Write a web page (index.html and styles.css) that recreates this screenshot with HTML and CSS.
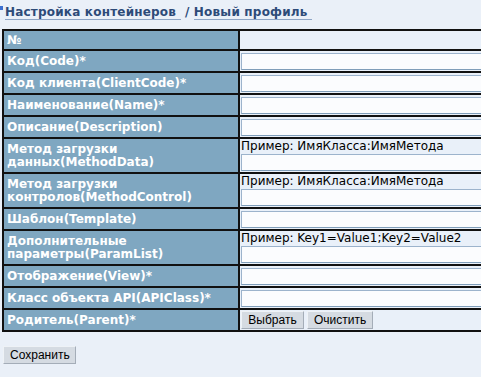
FILE: index.html
```html
<!DOCTYPE html>
<html lang="ru">
<head>
  <meta charset="UTF-8" />
  <title>Новый профиль</title>
  <link rel="stylesheet" href="styles.css">
</head>
<body>
  <div class="crumbs">
    <span class="mark"></span><a href="#" class="link">Настройка контейнеров&nbsp;</a> / <a href="#" class="link">Новый профиль&nbsp;</a>
  </div>

  <table class="form">
    <tr class="head">
      <td class="name">№</td>
      <td class="value"></td>
    </tr>
    <tr>
      <td class="name">Код(Code)*</td>
      <td class="value"><input type="text" /></td>
    </tr>
    <tr>
      <td class="name">Код клиента(ClientCode)*</td>
      <td class="value"><input type="text" /></td>
    </tr>
    <tr>
      <td class="name">Наименование(Name)*</td>
      <td class="value"><input type="text" /></td>
    </tr>
    <tr>
      <td class="name">Описание(Description)</td>
      <td class="value"><input type="text" /></td>
    </tr>
    <tr>
      <td class="name">Метод загрузки<br>данных(MethodData)</td>
      <td class="value"><div class="hint">Пример: ИмяКласса:ИмяМетода</div><input type="text" /></td>
    </tr>
    <tr>
      <td class="name">Метод загрузки<br>контролов(MethodControl)</td>
      <td class="value"><div class="hint">Пример: ИмяКласса:ИмяМетода</div><input type="text" /></td>
    </tr>
    <tr>
      <td class="name">Шаблон(Template)</td>
      <td class="value"><input type="text" /></td>
    </tr>
    <tr>
      <td class="name">Дополнительные<br>параметры(ParamList)</td>
      <td class="value"><div class="hint">Пример: Key1=Value1;Key2=Value2</div><input type="text" /></td>
    </tr>
    <tr>
      <td class="name">Отображение(View)*</td>
      <td class="value"><input type="text" /></td>
    </tr>
    <tr>
      <td class="name">Класс объекта API(APIClass)*</td>
      <td class="value"><input type="text" /></td>
    </tr>
    <tr>
      <td class="name">Родитель(Parent)*</td>
      <td class="value"><button type="button" class="btn pick">Выбрать</button><button type="button" class="btn clear">Очистить</button></td>
    </tr>
  </table>

  <div class="actions">
    <button type="button" class="btn save">Сохранить</button>
  </div>
</body>
</html>
```

FILE: styles.css
```css
html, body {
  margin: 0;
  overflow: hidden;
}

body {
  background-color: #eaf0f8;
  font-family: 'DejaVu Sans', Verdana, sans-serif;
  font-size: 11px;
  padding: 5px 0 0 2px;
}

.crumbs {
  height: 24px;
  padding-left: 3px;
  color: #2d4b78;
  font-weight: bold;
  font-size: 12px;
  letter-spacing: 0.2px;
  position: relative;
}

.mark {
  position: absolute;
  left: -2px;
  top: 1px;
  width: 3px;
  height: 4px;
  background: #3b6fd0;
}

.link {
  color: #2d4b78;
  text-decoration: none;
  border-bottom: 1px solid #8ea6c6;
}

.form {
  border-collapse: collapse;
  width: 640px;
}

.form td {
  border: 2px solid #111;
  padding: 0 3px;
  height: 20px;
}

.form .head td {
  height: 18px;
}

.name {
  width: 228px;
  background: #7fa7c1;
  color: #fff;
  font-weight: bold;
  font-size: 12px;
  line-height: 13px;
}

.value {
  background: #e9f0f9;
  color: #000;
  padding-left: 1px !important;
}

.hint {
  font-size: 12px;
  line-height: 14px;
}

.value input {
  display: block;
  box-sizing: border-box;
  width: 100%;
  height: 17px;
  margin: 1px 0;
  border: 1px solid #7f9db9;
  border-top-color: #9cb3cc;
  border-left-color: #9cb3cc;
  background: #fbfcfe;
  padding: 0 2px;
}

.btn {
  font-family: 'Liberation Sans', Tahoma, sans-serif;
  font-size: 12px;
  color: #000;
  background: #d5dbe2;
  border: 1px solid #a4adb8;
  border-top-color: #eef2f6;
  border-left-color: #eef2f6;
  height: 18px;
  padding: 0 6px;
  margin: 1px 3px 1px 0;
}

.pick {
  width: 63px;
}

.clear {
  width: 66px;
}

.actions {
  padding: 13px 0 0 1px;
}

.save {
  width: 73px;
}
```
